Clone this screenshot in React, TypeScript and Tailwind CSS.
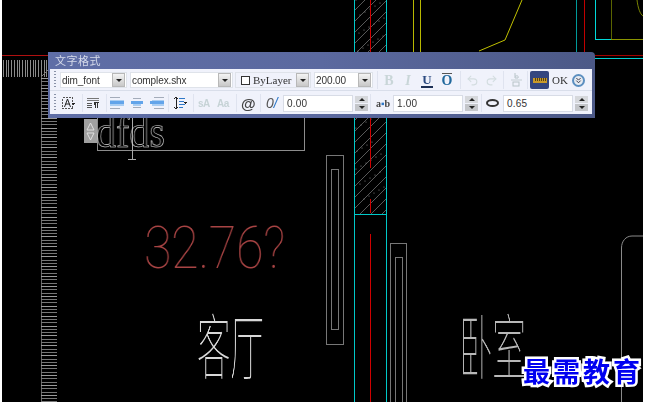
import React from 'react';
import { Undo2, Redo2, ChevronsDown } from 'lucide-react';

const cad = Array.from({ length: 60 }, (_, i) => i);

function CadLines() {
  return (
    <svg className="absolute left-0 top-0" width="641" height="402" viewBox="2 0 641 402" fill="none" shapeRendering="crispEdges">
      <defs>
        <clipPath id="wall">
          <rect x="354" y="0" width="32" height="214" />
        </clipPath>
      </defs>
      {/* left hatch */}
      <line x1="2" y1="55.5" x2="48" y2="55.5" stroke="#b01010" />
      {Array.from({ length: 17 }, (_, i) => (
        <line key={i} x1={3.5 + i * 2.7} y1="60" x2={3.5 + i * 2.7} y2="77" stroke="#8a8a8a" />
      ))}
      <line x1="41.5" y1="77" x2="41.5" y2="402" stroke="#666" />
      {Array.from({ length: 99 }, (_, i) => (
        <line key={i} x1="41" y1={78.5 + i * 3.3} x2="57" y2={78.5 + i * 3.3} stroke={i % 3 === 0 ? '#9a9a9a' : '#777'} />
      ))}
      <line x1="41" y1="77" x2="48" y2="70" stroke="#777" shapeRendering="auto" />

      {/* text box */}
      <path d="M97.5 118V150.5H304.5V118" stroke="#8c8c8c" />
      <path d="M132.5 118V159M128 159.5H136" stroke="#aaa" />

      {/* columns */}
      <rect x="326.5" y="155.5" width="17" height="189" stroke="#777" />
      <rect x="331.5" y="169.5" width="7" height="160" stroke="#777" />
      <path d="M390.5 402V243.5H406.5V402" stroke="#777" />
      <path d="M395.5 402V257.5H402.5V402" stroke="#777" />

      {/* wall */}
      <g clipPath="url(#wall)" shapeRendering="auto">
        {Array.from({ length: 24 }, (_, i) => (
          <line key={i} x1="350" y1={i * 11 + 4} x2="390" y2={i * 11 - 36} stroke="#808080" strokeWidth="0.7" />
        ))}
        {cad.map(i => (
          <circle key={i} cx={356 + ((i * 37) % 29)} cy={(i * 71) % 210} r="0.6" fill="#888" />
        ))}
      </g>
      <rect x="354" y="0" width="1" height="402" fill="#00c8c8" />
      <rect x="386" y="0" width="1" height="402" fill="#00c8c8" />
      <rect x="354" y="214" width="33" height="1" fill="#00c8c8" />
      <rect x="370" y="0" width="1" height="168" fill="#d00000" />
      <rect x="370" y="199" width="1" height="14" fill="#d00000" />
      <rect x="370" y="234" width="1" height="168" fill="#d00000" />

      {/* yellow */}
      <rect x="413" y="0" width="1" height="52" fill="#b8b800" />
      <rect x="420" y="0" width="1" height="52" fill="#b8b800" />
      <path d="M522 0L505 40L479 51" stroke="#c0c000" shapeRendering="auto" />

      {/* top right */}
      <rect x="576" y="0" width="1" height="52" fill="#009a9a" />
      <rect x="584" y="0" width="1" height="52" fill="#c00000" />
      <rect x="595" y="0" width="1" height="40" fill="#00d8d8" />
      <rect x="595" y="39" width="16" height="1" fill="#00d8d8" />
      <rect x="611" y="0" width="1" height="40" fill="#5a6400" />
      <rect x="611" y="39" width="32" height="1" fill="#8a9400" />
      <path d="M637 0C638 8 640 14 643 16" stroke="#7a8400" shapeRendering="auto" />
      <rect x="595" y="55" width="48" height="1" fill="#a00000" />
      <rect x="595" y="58" width="48" height="1" fill="#00d0d0" />

      {/* right room */}
      <path d="M621.5 402V248C621.5 241 626 236 632 236H643" stroke="#8a8a8a" shapeRendering="auto" />
    </svg>
  );
}

function Grip() {
  return <div className="ml-1 h-[18px] w-[2px] [background:repeating-linear-gradient(#8a93a8_0_1px,transparent_1px_3px)]" />;
}

function Sep({ className }: { className: string }) {
  return <div className={`h-[18px] w-px bg-[#dfe3ef] ${className}`} />;
}

function ArrowBox() {
  return (
    <div className="flex h-[14px] w-[13px] items-center justify-center border border-[#b8b8b8] bg-gradient-to-b from-[#f4f4f4] to-[#c8c8c8]">
      <div className="h-0 w-0 border-x-[3px] border-t-[3px] border-x-transparent border-t-[#222]" />
    </div>
  );
}

function Combo({ label, width, className }: { label: string; width: string; className: string }) {
  return (
    <div className={`flex h-4 items-center justify-between border border-[#dfe3ea] bg-white pl-[1px] pr-[1px] ${width} ${className}`}>
      <span className="text-[10px] tracking-[-0.1px] text-[#333]">{label}</span>
      <ArrowBox />
    </div>
  );
}

function Spin({ value, width, className }: { value: string; width: string; className: string }) {
  return (
    <div className={`flex items-center ${className}`}>
      <div className={`flex h-[17px] items-center border border-[#d8dce6] bg-white pl-[3px] text-[10px] tracking-[0.2px] text-[#333] ${width}`}>{value}</div>
      <div className="ml-[2px] flex flex-col gap-[1px]">
        <div className="flex h-[7px] w-[13px] items-center justify-center bg-[#d6d8dc]">
          <div className="h-0 w-0 border-x-[3px] border-b-[3px] border-x-transparent border-b-[#222]" />
        </div>
        <div className="flex h-[7px] w-[13px] items-center justify-center bg-[#c4c6ca]">
          <div className="h-0 w-0 border-x-[3px] border-t-[3px] border-x-transparent border-t-[#222]" />
        </div>
      </div>
    </div>
  );
}

function AlignIcon({ className, x }: { className: string; x: number[] }) {
  return (
    <svg className={className} width="14" height="13" viewBox="0 0 14 13" shapeRendering="crispEdges">
      <rect x={x[0]} y="0" width={x[1]} height="1" fill="#a4acba" />
      <rect x={x[2]} y="3" width={x[3]} height="1" fill="#a9cdf2" />
      <rect x="0" y="4" width="14" height="3" fill="#62a4ea" />
      <rect x={x[2]} y="7" width={x[3]} height="2" fill="#a9cdf2" />
      <rect x={x[0]} y="11" width={x[1]} height="1" fill="#a4acba" />
    </svg>
  );
}

function FormatBar() {
  return (
    <div className="absolute left-[46px] top-[52px] h-[66px] w-[547px] rounded-tr-[4px] bg-gradient-to-r from-[#5f6ea6] via-[#5b699f] to-[#4c5987] font-['Liberation_Sans',sans-serif]">
      <div className="flex h-[17px] items-center pl-[7px] font-['Noto_Sans_CJK_SC',sans-serif] text-[11px] tracking-[0.5px] text-[#d5daea]">文字格式</div>
      <div className="ml-[2px] mr-[3px] flex h-[45px] flex-col bg-[#f0f2fb]">
        {/* top row */}
        <div className="flex h-[22px] items-center border-b border-[#d9deea] pt-[1px]">
          <Grip />
          <Combo label="dim_font" width="w-[67px]" className="ml-[4px]" />
          <Combo label="complex.shx" width="w-[103px]" className="ml-[3px]" />
          <div className="ml-[2px] flex h-4 w-[76px] items-center justify-between border border-[#dfe3ea] pl-[5px] pr-[1px]">
            <div className="flex items-center">
              <div className="h-[9px] w-[9px] border border-[#333] bg-white" />
              <span className="ml-[3px] font-['Liberation_Serif',serif] text-[11px] text-[#333]">ByLayer</span>
            </div>
            <ArrowBox />
          </div>
          <Combo label="200.00" width="w-[59px]" className="ml-[3px]" />
          <Sep className="ml-[4px]" />
          <div className="ml-[2px] flex w-[18px] justify-center font-['Liberation_Serif',serif] text-[14px] font-bold text-[#c9d6d8]">B</div>
          <div className="ml-[1px] flex w-[18px] justify-center font-['Liberation_Serif',serif] text-[14px] font-bold italic text-[#c9d6d8]">I</div>
          <div className="ml-[1px] flex w-[18px] justify-center">
            <span className="border-b-2 border-[#1d2f55] px-[1px] font-['Liberation_Serif',serif] text-[13px] leading-[13px] font-bold text-[#2b4a80]">U</span>
          </div>
          <div className="ml-[2px] flex w-[18px] justify-center">
            <span className="border-t border-[#555] font-['Liberation_Serif',serif] text-[14px] leading-[13px] font-bold text-[#20689c]">O</span>
          </div>
          <Sep className="ml-[4px]" />
          <div className="ml-[2px] flex w-[19px] justify-center"><Undo2 size={13} strokeWidth={2} className="text-[#d3dde0]" /></div>
          <div className="flex w-[19px] justify-center"><Redo2 size={13} strokeWidth={2} className="text-[#d3dde0]" /></div>
          <Sep className="ml-[2px]" />
          <div className="ml-[3px] flex w-[19px] justify-center">
            <svg width="11" height="14" viewBox="0 0 11 14" fill="none">
              <path d="M4 0V5M4 3.5C6 2 8 3 7 5H4" stroke="#b8c4c8" />
              <path d="M0 7H11" stroke="#c4ced2" />
              <rect x="2" y="9" width="6" height="4" stroke="#b8c4c8" />
            </svg>
          </div>
          <Sep className="ml-[1px]" />
          <div className="ml-[2px] flex h-[18px] w-[19px] items-center justify-center rounded-[2px] bg-[#34467f]">
            <svg width="14" height="5" viewBox="0 0 14 5" shapeRendering="crispEdges">
              <rect width="14" height="5" fill="#c89a2a" />
              <path d="M2 0V3M4 0V3M6 0V3M8 0V3M10 0V3M12 0V3" stroke="#5a4310" />
            </svg>
          </div>
          <span className="ml-[3px] w-[15px] font-['Liberation_Serif',serif] text-[11px] text-[#333]">OK</span>
          <div className="ml-[5px] flex h-[13px] w-[13px] items-center justify-center rounded-full border-2 border-[#5c8fc0] bg-[#e6ebf2]">
            <ChevronsDown size={9} strokeWidth={2.5} className="text-[#334]" />
          </div>
        </div>
        {/* bottom row */}
        <div className="flex h-[23px] items-center pt-[1px]">
          <Grip />
          <svg className="ml-[5px]" width="14" height="14" viewBox="0 0 14 14" fill="none" shapeRendering="crispEdges">
            <rect x="1.5" y="1.5" width="10" height="11" stroke="#555" strokeDasharray="2 1" />
            <path d="M3.5 11L6.5 3L9.5 11M4.5 8H8.5" stroke="#222" shapeRendering="auto" />
            <path d="M11 7H14L12.5 9Z" fill="#222" />
          </svg>
          <Sep className="ml-[7px]" />
          <svg className="ml-[4px]" width="12" height="12" viewBox="0 0 12 12" shapeRendering="crispEdges">
            <path d="M0 1H12M0 3.5H12" stroke="#777" />
            <path d="M0 6H5M0 8H5M0 10H5" stroke="#555" />
            <path d="M7 5H12V6H11V11H10V6H9V11H8V8H7Z" fill="#333" />
          </svg>
          <Sep className="ml-[7px]" />
          <AlignIcon className="ml-[3px]" x={[0, 10, 0, 14]} />
          <AlignIcon className="ml-[7px] w-[12px]" x={[2, 10, 2, 10]} />
          <AlignIcon className="ml-[7px]" x={[4, 10, 2, 12]} />
          <Sep className="ml-[4px]" />
          <svg className="ml-[4px]" width="14" height="14" viewBox="0 0 14 14" fill="none" shapeRendering="crispEdges">
            <path d="M3 1V13M1 3L3 1L5 3M1 11L3 13L5 11" stroke="#222" />
            <path d="M6 2H12M6 5H11M6 8H12M6 11H10" stroke="#2f78c8" />
            <path d="M11 6H14L12.5 8Z" fill="#222" />
          </svg>
          <Sep className="ml-[6px]" />
          <span className="ml-[4px] w-[13px] text-[10px] font-bold tracking-[-0.5px] text-[#c6d3d6]">sA</span>
          <span className="ml-[6px] w-[13px] text-[10px] font-bold tracking-[-0.5px] text-[#c6d3d6]">Aa</span>
          <Sep className="ml-[6px]" />
          <span className="ml-[4px] w-[15px] text-[15px] leading-none font-bold text-[#444]">@</span>
          <Sep className="ml-[4px]" />
          <span className="ml-[5px] w-[15px] text-[14px] leading-none italic text-[#555]">0<span className="text-[#2f78c8]">/</span></span>
          <Spin value="0.00" width="w-[70px]" className="ml-[2px]" />
          <Sep className="ml-[2px]" />
          <span className="ml-[5px] w-[17px] font-['Liberation_Serif',serif] text-[10px] font-bold whitespace-nowrap text-[#444]">a<span className="text-[#2f78c8]">▪</span>b</span>
          <Spin value="1.00" width="w-[70px]" className="ml-0" />
          <Sep className="ml-[3px]" />
          <svg className="ml-[4px]" width="13" height="8" viewBox="0 0 13 8" fill="none">
            <ellipse cx="6.5" cy="4" rx="5.5" ry="3" stroke="#333" strokeWidth="2" />
          </svg>
          <Spin value="0.65" width="w-[70px]" className="ml-[4px]" />
        </div>
      </div>
    </div>
  );
}

export default function App() {
  return (
    <div className="h-[402px] w-[646px] overflow-hidden bg-white pl-[2px]">
      <div className="relative h-[402px] w-[641px] overflow-hidden bg-black font-['Liberation_Sans',sans-serif] blur-[0.3px]">
        <CadLines />

        {/* drawing text */}
        <span className="absolute left-[94px] top-[106px] origin-left scale-x-[0.87] font-['Liberation_Serif',serif] text-[46px] leading-[52px] text-transparent will-change-transform [-webkit-text-stroke:0.6px_#e0e0e0]">dfds</span>
        <span className="absolute left-[142px] top-[213px] origin-left scale-x-[0.84] font-['Roboto',sans-serif] text-[60px] leading-[70px] font-thin tracking-[-0.5px] whitespace-nowrap text-[#a84444] will-change-transform">32.76?</span>
        <span className="absolute left-[195px] top-[294px] origin-left scale-x-[0.47] font-['Noto_Sans_CJK_SC',sans-serif] text-[71px] leading-[96px] font-thin whitespace-nowrap text-[#d8d8d8] will-change-transform">客厅</span>
        <span className="absolute left-[457px] top-[294px] origin-left scale-x-[0.47] font-['Noto_Sans_CJK_SC',sans-serif] text-[71px] leading-[96px] font-thin whitespace-nowrap text-[#b8b8b8] will-change-transform">卧室</span>

        {/* spinner beside the text box */}
        <div className="absolute left-[82px] top-[119px] flex h-6 w-[13px] flex-col items-center justify-center gap-[1px] bg-[#a0a0a0]">
          <svg width="9" height="9" viewBox="0 0 9 9" fill="none"><path d="M4.5 1L8 8H1Z" stroke="#e0e0e0" /></svg>
          <svg width="9" height="9" viewBox="0 0 9 9" fill="none"><path d="M4.5 8L8 1H1Z" stroke="#e0e0e0" /></svg>
        </div>

        <FormatBar />

        {/* watermark */}
        <span className="absolute left-[521px] top-[351px] font-['Noto_Sans_CJK_SC',sans-serif] text-[27px] leading-[40px] font-bold tracking-[3px] whitespace-nowrap text-[#0000f0] [paint-order:stroke_fill] [-webkit-text-stroke:5px_white]">最需教育</span>
      </div>
    </div>
  );
}
